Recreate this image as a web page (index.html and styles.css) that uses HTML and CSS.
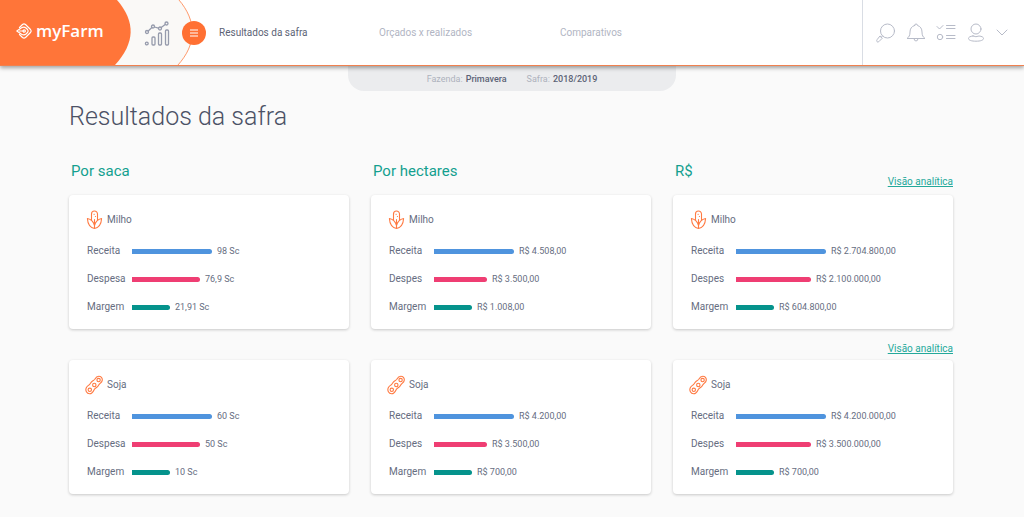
FILE: index.html
```html
<!DOCTYPE html>
<html lang="pt-BR">
<head>
<meta charset="utf-8">
<meta name="viewport" content="width=device-width, initial-scale=1">
<title>myFarm - Resultados da safra</title>
<link rel="stylesheet" href="styles.css">
</head>
<body>
<svg class="sprite" aria-hidden="true">
  <symbol id="milho" viewBox="0 0 18 20">
    <path d="M6.500 9.500V4a3 3 0 0 1 6 0v5.500M9.500 18.500C6 17.800 2.800 15 2.400 8.500 5.500 9.200 8.500 11.500 9.500 15.500c1-4 4-6.300 7.100-7C16.200 15 13 17.800 9.500 18.500zM9.500 9.500v9"/>
    <path d="M9 4.300h.3M10.400 6.500h.1"/>
  </symbol>
  <symbol id="soja" viewBox="0 0 18 20">
    <path d="M1.400 12.400C2.200 10.800 3.700 10.400 4.700 9.300 5.700 8.200 5.900 7.400 7 6.500 8 5.700 9 5.300 9.800 4.200 10.800 2.400 12 1.200 13.800 1.200c2.200 0 3.700 1.700 3.500 3.900-.1 1.900-1.600 2.900-2.800 3.900-1 .9-1.200 2-2.200 2.900-1 .9-2.200 1.300-3 2.500-.9 1.900-2.300 4.400-4.700 4.400-2.800 0-4.700-3.400-3.200-6.400z"/>
    <circle cx="4.800" cy="14.800" r="1.700"/><circle cx="9.300" cy="10" r="1.700"/><circle cx="13.600" cy="5.100" r="1.700"/>
  </symbol>
</svg>

<header class="topbar">
  <div class="brand">
    <svg class="brand-shape" viewBox="0 0 206 65" preserveAspectRatio="none" aria-hidden="true">
      <path fill="#faf9f7" d="M0 0H179C197 21 197 44 178 65H0z"/>
      <path fill="none" stroke="#ff9a6c" d="M179 0C197 21 197 44 178 65"/>
      <path fill="#ff7539" d="M0 0H117C136 22 135 43 115 65H0z"/>
    </svg>
    <a class="logo" href="#">
      <svg class="logo-mark" viewBox="0 0 16 16" aria-hidden="true">
        <path d="M3.500 4.500 6.500 1.500q1.500-1.300 3 0L14.500 6.500q1.200 1.500 0 3L9.500 14.500q-1.500 1.300-3 0L3.500 11.500"/>
        <path d="M.8 8 5.600 4.700Q8 3.200 10 5l1.500 1.500q1.200 1.500 0 3L10 11Q8 12.800 5.600 11.300zM3.500 8H8"/>
        <circle cx="8.200" cy="8" r="1.200"/>
      </svg>
      <span>myFarm</span>
    </a>
    <svg class="module-icon" viewBox="0 0 26 26" aria-hidden="true">
      <circle cx="3" cy="12" r="1.500"/><circle cx="9" cy="6.500" r="1.500"/><circle cx="16" cy="8.500" r="1.500"/><circle cx="22.500" cy="3.500" r="1.500"/>
      <path d="M4.200 10.900 7.900 7.500M10.500 7l4 1.200M17.200 7.600l4-3.100"/>
      <circle cx="2.800" cy="23.500" r="1.400"/>
      <rect x="8" y="17" width="3" height="8" rx="1"/><rect x="14.500" y="13" width="3" height="12" rx="1"/><rect x="21.500" y="10" width="3" height="15" rx="1"/>
    </svg>
    <button class="menu" type="button" aria-label="Abrir menu">
      <svg viewBox="0 0 8 8" aria-hidden="true"><path d="M0 1h8M0 4h8M0 7h8"/></svg>
    </button>
  </div>
  <nav class="nav">
    <a class="current" href="#" aria-current="page">Resultados da safra</a>
    <a href="#">Orçados x realizados</a>
    <a href="#">Comparativos</a>
  </nav>
  <div class="actions">
    <button type="button" aria-label="Buscar"><svg viewBox="0 0 20 20"><circle cx="11.500" cy="8" r="7"/><path d="m6.500 13-1.200 1.200M4.300 13.200l2 2-3.500 3.500q-1 .8-1.800 0t0-1.900z"/></svg></button>
    <button type="button" aria-label="Notificações"><svg viewBox="0 0 20 20"><path d="M8.500 2.500a1.500 1.500 0 0 1 3 0C14.500 3.300 16 6 16 9c0 3.500 1 5 3 6.500H1C3 14 4 12.500 4 9c0-3 1.500-5.700 4.500-6.500zM8 15.500a2 2.500 0 0 0 4 0"/></svg></button>
    <button type="button" aria-label="Tarefas"><svg viewBox="0 0 20 20"><path d="m1 3.500 2.500 2.500L7 2.500M10.500 2.500H19M10.500 5.500H19M10.500 12.500H19M10.500 15.500H19"/><circle cx="4" cy="14" r="2.700"/></svg></button>
    <button type="button" aria-label="Perfil"><svg viewBox="0 0 20 20"><circle cx="10" cy="6" r="5"/><path d="M7 13c-3 .3-4.500 1.200-4.500 2.500 0 1.700 3 2.700 7.500 2.700s7.500-1 7.500-2.700c0-1.300-1.500-2.200-4.500-2.500q-3 1.500-6 0z"/></svg></button>
    <button class="more" type="button" aria-label="Mais opções"><svg viewBox="0 0 12 20"><path d="m1 7 5 5 5-5"/></svg></button>
  </div>
</header>

<dl class="context">
  <div><dt>Fazenda:</dt><dd>Primavera</dd></div>
  <div><dt>Safra:</dt><dd>2018/2019</dd></div>
</dl>

<main class="page">
  <h1>Resultados da safra</h1>
  <div class="columns">
    <section class="column">
      <header class="column-head"><h2>Por saca</h2></header>
      <article class="card">
        <h3><svg aria-hidden="true"><use href="#milho"/></svg>Milho</h3>
        <dl class="rows">
          <div class="row"><dt>Receita</dt><dd><span class="bar income" style="width:80px"></span>98 Sc</dd></div>
          <div class="row"><dt>Despesa</dt><dd><span class="bar expense" style="width:68px"></span>76,9 Sc</dd></div>
          <div class="row"><dt>Margem</dt><dd><span class="bar margin" style="width:38px"></span>21,91 Sc</dd></div>
        </dl>
      </article>
      <div class="between"></div>
      <article class="card">
        <h3><svg aria-hidden="true"><use href="#soja"/></svg>Soja</h3>
        <dl class="rows">
          <div class="row"><dt>Receita</dt><dd><span class="bar income" style="width:80px"></span>60 Sc</dd></div>
          <div class="row"><dt>Despesa</dt><dd><span class="bar expense" style="width:68px"></span>50 Sc</dd></div>
          <div class="row"><dt>Margem</dt><dd><span class="bar margin" style="width:38px"></span>10 Sc</dd></div>
        </dl>
      </article>
    </section>

    <section class="column">
      <header class="column-head"><h2>Por hectares</h2></header>
      <article class="card">
        <h3><svg aria-hidden="true"><use href="#milho"/></svg>Milho</h3>
        <dl class="rows">
          <div class="row"><dt>Receita</dt><dd><span class="bar income" style="width:80px"></span>R$ 4.508,00</dd></div>
          <div class="row"><dt>Despes</dt><dd><span class="bar expense" style="width:53px"></span>R$ 3.500,00</dd></div>
          <div class="row"><dt>Margem</dt><dd><span class="bar margin" style="width:38px"></span>R$ 1.008,00</dd></div>
        </dl>
      </article>
      <div class="between"></div>
      <article class="card">
        <h3><svg aria-hidden="true"><use href="#soja"/></svg>Soja</h3>
        <dl class="rows">
          <div class="row"><dt>Receita</dt><dd><span class="bar income" style="width:80px"></span>R$ 4.200,00</dd></div>
          <div class="row"><dt>Despes</dt><dd><span class="bar expense" style="width:53px"></span>R$ 3.500,00</dd></div>
          <div class="row"><dt>Margem</dt><dd><span class="bar margin" style="width:38px"></span>R$ 700,00</dd></div>
        </dl>
      </article>
    </section>

    <section class="column">
      <header class="column-head"><h2>R$</h2><a href="#">Visão analítica</a></header>
      <article class="card">
        <h3><svg aria-hidden="true"><use href="#milho"/></svg>Milho</h3>
        <dl class="rows">
          <div class="row"><dt>Receita</dt><dd><span class="bar income" style="width:90px"></span>R$ 2.704.800,00</dd></div>
          <div class="row"><dt>Despes</dt><dd><span class="bar expense" style="width:75px"></span>R$ 2.100.000,00</dd></div>
          <div class="row"><dt>Margem</dt><dd><span class="bar margin" style="width:38px"></span>R$ 604.800,00</dd></div>
        </dl>
      </article>
      <div class="between"><a href="#">Visão analítica</a></div>
      <article class="card">
        <h3><svg aria-hidden="true"><use href="#soja"/></svg>Soja</h3>
        <dl class="rows">
          <div class="row"><dt>Receita</dt><dd><span class="bar income" style="width:90px"></span>R$ 4.200.000,00</dd></div>
          <div class="row"><dt>Despes</dt><dd><span class="bar expense" style="width:75px"></span>R$ 3.500.000,00</dd></div>
          <div class="row"><dt>Margem</dt><dd><span class="bar margin" style="width:38px"></span>R$ 700,00</dd></div>
        </dl>
      </article>
    </section>
  </div>
</main>
</body>
</html>
```

FILE: styles.css
```css
* { box-sizing: border-box; }

body {
  margin: 0;
  background: #fafafa;
  color: #666d7f;
  font: 10px/16px Roboto, "Liberation Sans", sans-serif;
}

h1, h2, h3, dl, dd { margin: 0; }

button {
  display: grid;
  place-items: center;
  padding: 0;
  border: 0;
  background: none;
  cursor: pointer;
}

svg { fill: none; stroke-linecap: round; stroke-linejoin: round; }

.sprite { display: none; }

/* Top bar */
.topbar {
  position: relative;
  z-index: 1;
  display: flex;
  min-height: 66px;
  background: #fff;
  border-bottom: 1px solid #f0814f;
  box-shadow: 0 2px 4px rgba(0, 0, 0, .35);
}

.brand {
  position: relative;
  display: flex;
  align-items: center;
  flex: none;
  width: 206px;
  padding-left: 16px;
}

.brand-shape {
  position: absolute;
  inset: 0;
  width: 100%;
  height: 100%;
}

.logo {
  position: relative;
  display: flex;
  align-items: center;
  gap: 4px;
  flex: 1;
  padding-bottom: 4px;
  color: #fff;
  font: 600 17px/24px "Open Sans", "Noto Sans", sans-serif;
  text-decoration: none;
}

.logo-mark { width: 16px; height: 16px; stroke: #fff; stroke-width: 1.2; }

.module-icon {
  position: relative;
  width: 26px;
  height: 26px;
  margin-right: 12px;
  stroke: #969bac;
  stroke-width: 1.3;
}

.menu {
  position: relative;
  width: 24px;
  height: 24px;
  border-radius: 50%;
  background: #ff7033;
}

.menu svg { width: 8px; height: 8px; stroke: #fff; stroke-width: 1.2; stroke-linecap: butt; }

.nav {
  display: grid;
  grid-template-columns: 160px 181px auto;
  align-content: center;
  flex: 1;
  padding-left: 13px;
}

.nav a { color: #b1b5c3; text-decoration: none; }
.nav .current { color: #5c6376; }

.actions {
  display: flex;
  align-items: center;
  gap: 10px;
  padding: 0 16px 0 13px;
  border-left: 1px solid #d9dde4;
}

.actions svg { width: 20px; height: 20px; stroke: #b7bbc8; }
.actions .more svg { width: 12px; }

/* Selected farm and harvest */
.context {
  display: flex;
  justify-content: center;
  gap: 20px;
  width: 32%;
  min-width: 240px;
  margin: 0 auto;
  padding: 5px 0 4px;
  border-radius: 0 0 16px 16px;
  background: #ebecee;
  font-size: 9px;
}

.context div { display: flex; gap: 3px; }
.context dt { color: #aeb2bd; }
.context dd { color: #5c6376; font-weight: 500; }

/* Results */
.page { padding: 9px 71px 23px 69px; }

h1 {
  color: #4c5266;
  font-size: 25px;
  font-weight: 300;
  line-height: 34px;
}

.columns {
  display: grid;
  grid-template-columns: repeat(3, 1fr);
  gap: 22px;
  margin-top: 25px;
}

.column-head {
  display: flex;
  justify-content: space-between;
  align-items: flex-start;
  height: 36px;
  padding-left: 2px;
}

.column-head h2 {
  color: #13a08f;
  font-size: 15px;
  font-weight: 400;
  line-height: 24px;
}

.column-head a { margin-top: 15px; }
.column a { color: #24a99a; }

.between {
  display: flex;
  justify-content: flex-end;
  height: 31px;
  padding-top: 12px;
}

.card {
  padding: 13px 16px 8px;
  border-radius: 4px;
  background: #fff;
  box-shadow: 0 1px 3px rgba(0, 0, 0, .2);
}

.card h3 {
  display: flex;
  align-items: center;
  gap: 4px;
  height: 24px;
  font-size: 10px;
  font-weight: 400;
}

.card h3 svg { width: 18px; height: 20px; stroke: #ff7a42; stroke-width: 1.1; }

.rows { padding: 5px 0 0 2px; }

.row { display: grid; grid-template-columns: 45px 1fr; align-items: center; height: 28px; }

.row dd { display: flex; align-items: center; gap: 5px; font-size: 9px; }

.bar { flex: none; height: 5px; border-radius: 0 3px 3px 0; }
.income { background: #4f94de; }
.expense { background: #ef3e73; }
.margin { background: #05938c; }
```
